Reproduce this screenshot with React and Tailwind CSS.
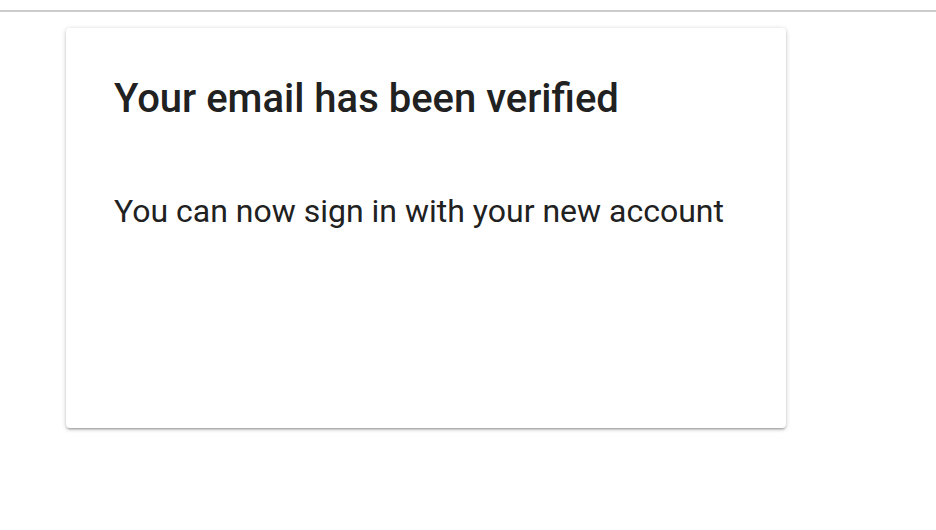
import React from "react";

const App = () => {
  return (
    <div className="min-h-[530px] w-[936px] bg-white font-['Roboto',sans-serif] text-[#212121]">
      <div className="pt-[10px]">
        <div className="h-[2px] bg-[#cccccc]" />
      </div>

      <div className="pl-[66px] pt-[16px]">
        <div className="flex h-[400px] w-[720px] flex-col rounded-[4px] bg-white px-[48px] pt-[47px] shadow-[0_2px_2px_0_rgba(0,0,0,0.14),0_3px_1px_-2px_rgba(0,0,0,0.12),0_1px_5px_0_rgba(0,0,0,0.2)]">
          <h1 className="text-[40px] font-medium leading-[48px]">
            Your email has been verified
          </h1>
          <p className="mt-[68px] text-[32px] leading-[40px]">
            You can now sign in with your new account
          </p>
        </div>
      </div>
    </div>
  );
};

export default App;
